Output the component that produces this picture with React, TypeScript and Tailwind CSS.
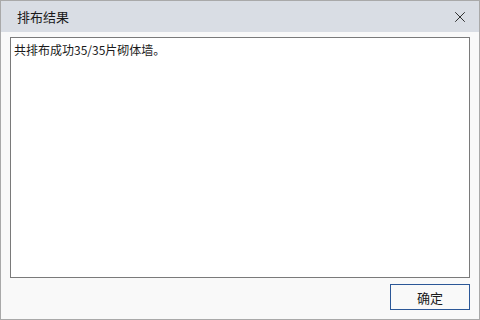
import { X } from 'lucide-react';

const font = { fontFamily: '"Noto Sans CJK SC", "Noto Sans", sans-serif' };

export default function App() {
  return (
    <div
      className="flex h-[320px] w-[480px] flex-col border border-[#a9a9a9] bg-[#f9f9f9] text-[#1a1a1a]"
      style={font}
    >
      <div className="flex h-[31px] shrink-0 items-center justify-between bg-[#d9dde4] pr-[10px] pl-4">
        <span className="text-[13px] leading-none">排布结果</span>
        <X size={18} strokeWidth={1.3} className="text-[#2b2b2b]" />
      </div>
      <div className="flex grow flex-col px-[9px] pt-[5px] pb-[9px]">
        <div className="h-[241px] border border-[#7a7a7a] bg-white px-[3px] pt-[3px] text-[12px] leading-[18px]">
          共排布成功35/35片砌体墙。
        </div>
        <div className="mt-[6px] flex justify-end">
          <button className="h-[26px] w-[80px] border border-[#2b5797] bg-[#f9f9f9] text-[13px] leading-none text-[#1a1a1a]">
            确定
          </button>
        </div>
      </div>
    </div>
  );
}
